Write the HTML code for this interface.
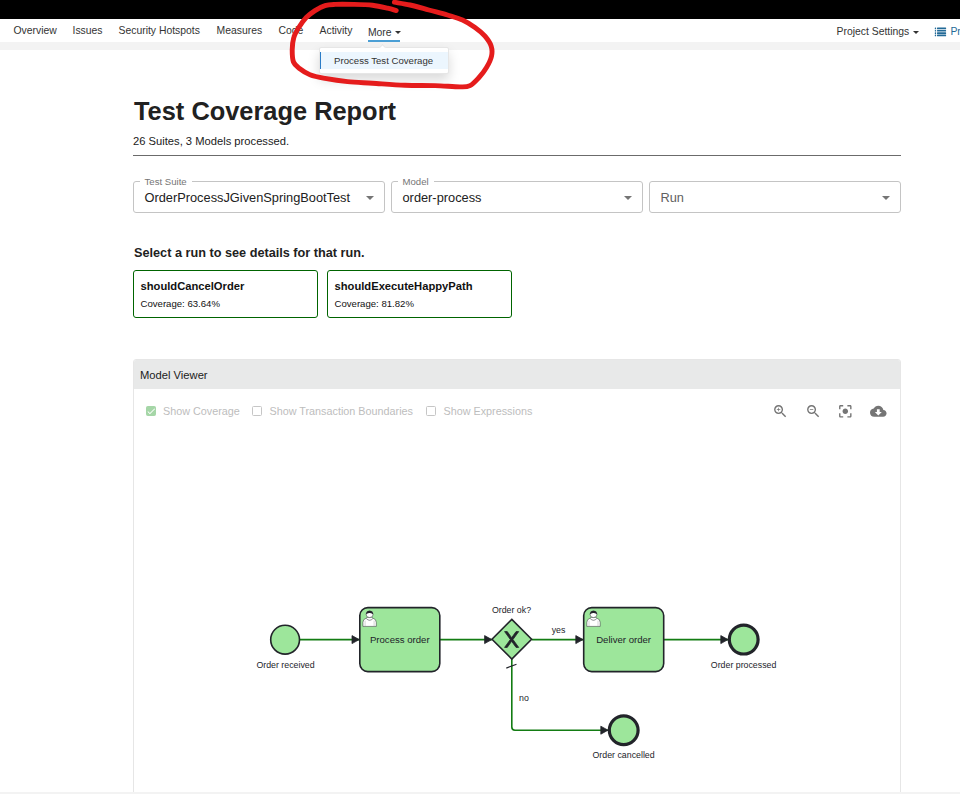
<!DOCTYPE html>
<html><head><meta charset="utf-8"><style>
*{box-sizing:border-box;margin:0;padding:0}
html,body{width:960px;height:794px;overflow:hidden;background:#fff}
body{position:relative;font-family:"Liberation Sans",sans-serif;color:#333}
.a{position:absolute;white-space:nowrap}
#topbar{left:0;top:0;width:960px;height:19px;background:#000}
#nav{left:0;top:19px;width:960px;height:23px;background:#fff}
#band{left:0;top:42px;width:960px;height:8px;background:#f3f3f3}
.ni{font-size:10.4px;line-height:12px;color:#333}
#more-ul{left:368px;top:40px;width:32px;height:2px;background:#4b9fd5}
.caret{width:0;height:0;border-left:3.2px solid transparent;border-right:3.2px solid transparent;border-top:3.2px solid #333}
#dd{left:319px;top:47px;width:129.5px;height:26.5px;background:#fff;border:1px solid #e6e6e6;border-radius:2px;box-shadow:0 6px 12px rgba(0,0,0,.15)}
#dd-item{left:319.8px;top:52px;width:128px;height:17px;background:#ecf6fe;border-left:1.5px solid #2a7cc7}
#dd-arrow{left:380.3px;top:44.6px;width:5px;height:5px;background:#fff;transform:rotate(45deg);border-left:1px solid #e6e6e6;border-top:1px solid #e6e6e6}
.title{font-size:25.4px;font-weight:bold;color:#212121;line-height:30px}
.sub{font-size:11.2px;color:#212121;line-height:13px}
#hr{left:133px;top:155px;width:768px;height:1px;background:#6b6b6b}
.sel{height:32px;border:1px solid #c4c4c4;border-radius:3px;top:181px}
.leg{font-size:9.6px;color:#757575;background:#fff;padding:0 5px;line-height:11px}
.val{font-size:12.8px;color:#212121;line-height:15px}
.arr{width:0;height:0;border-left:4px solid transparent;border-right:4px solid transparent;border-top:4px solid #757575}
.h2{font-size:12.7px;font-weight:bold;color:#212121;line-height:15px}
.card{top:270px;height:48px;border:1px solid #006400;border-radius:3px;width:185px}
.ct{font-size:11.2px;font-weight:bold;color:#111;line-height:13px}
.cc{font-size:9.6px;color:#111;line-height:11px}
#panel{left:133px;top:359px;width:768px;height:440px;border:1px solid #e6e6e6;border-radius:3px 3px 0 0}
#phead{left:134px;top:360px;width:766px;height:29px;background:#e8e9e9;border-radius:2px 2px 0 0}
.mv{font-size:11.2px;color:#212121;line-height:13px}
.cb{width:10.4px;height:10.4px;border:1px solid #c6c6c6;border-radius:1.5px;top:405.6px}
.cbl{font-size:10.8px;color:#bdbdbd;line-height:12px}
#bottom{left:0;top:792px;width:960px;height:2px;background:#f3f3f3}
</style></head><body>
<div class="a" id="topbar"></div>
<div class="a" id="nav"></div>
<div class="a" id="band"></div>
<div class="a ni" style="left:13.5px;top:24.5px">Overview</div>
<div class="a ni" style="left:72.5px;top:24.5px">Issues</div>
<div class="a ni" style="left:118.5px;top:24.5px">Security Hotspots</div>
<div class="a ni" style="left:216.5px;top:24.5px">Measures</div>
<div class="a ni" style="left:278.5px;top:24.5px">Code</div>
<div class="a ni" style="left:319.5px;top:24.5px">Activity</div>
<div class="a ni" style="left:367.9px;top:26.6px">More</div>
<div class="a caret" style="left:394.5px;top:31px"></div>
<div class="a" id="more-ul"></div>
<div class="a ni" style="left:836.5px;top:26px">Project Settings</div>
<div class="a caret" style="left:912.5px;top:30.5px"></div>
<svg class="a" style="left:934px;top:27px" width="13" height="10" viewBox="0 0 13 10">
<g fill="#236a97"><rect x="0.8" y="0.6" width="1.3" height="1.6" rx="0.5"/><rect x="3.0" y="0.6" width="9.1" height="1.6" rx="0.5"/><rect x="0.8" y="2.9" width="1.3" height="1.6" rx="0.5"/><rect x="3.0" y="2.9" width="9.1" height="1.6" rx="0.5"/><rect x="0.8" y="5.3" width="1.3" height="1.6" rx="0.5"/><rect x="3.0" y="5.3" width="9.1" height="1.6" rx="0.5"/><rect x="0.8" y="7.6" width="1.3" height="1.6" rx="0.5"/><rect x="3.0" y="7.6" width="9.1" height="1.6" rx="0.5"/></g></svg>
<div class="a ni" style="left:950.4px;top:26px;color:#236a97">Project Information</div>
<div class="a" id="dd"></div>
<div class="a" id="dd-arrow"></div>
<div class="a" id="dd-item"></div>
<div class="a" style="left:334.1px;top:54.6px;font-size:9.6px;line-height:11px;color:#333">Process Test Coverage</div>

<div class="a title" style="left:134px;top:96px">Test Coverage Report</div>
<div class="a sub" style="left:133px;top:135px">26 Suites, 3 Models processed.</div>
<div class="a" id="hr"></div>

<div class="a sel" style="left:133px;width:251.5px"></div>
<div class="a leg" style="left:139.5px;top:176px">Test Suite</div>
<div class="a val" style="left:144.5px;top:190px">OrderProcessJGivenSpringBootTest</div>
<div class="a arr" style="left:365.5px;top:196px"></div>
<div class="a sel" style="left:391px;width:251.5px"></div>
<div class="a leg" style="left:397.5px;top:176px">Model</div>
<div class="a val" style="left:402.5px;top:190px">order-process</div>
<div class="a arr" style="left:623.5px;top:196px"></div>
<div class="a sel" style="left:649px;width:252px"></div>
<div class="a val" style="left:660.5px;top:190px;color:#616161">Run</div>
<div class="a arr" style="left:881.5px;top:196px"></div>

<div class="a h2" style="left:134px;top:245.6px">Select a run to see details for that run.</div>
<div class="a card" style="left:133px"></div>
<div class="a ct" style="left:140.5px;top:280px">shouldCancelOrder</div>
<div class="a cc" style="left:140.5px;top:297.7px">Coverage: 63.64%</div>
<div class="a card" style="left:327px"></div>
<div class="a ct" style="left:334.5px;top:280px">shouldExecuteHappyPath</div>
<div class="a cc" style="left:334.5px;top:297.7px">Coverage: 81.82%</div>

<div class="a" id="panel"></div>
<div class="a" id="phead"></div>
<div class="a mv" style="left:140px;top:369px">Model Viewer</div>
<div class="a cb" style="left:145.6px;background:#a5d6a7;border-color:#a5d6a7"></div>
<svg class="a" style="left:145.6px;top:405.6px" width="10.4" height="10.4" viewBox="0 0 24 24"><path d="M9 16.17L4.83 12l-1.42 1.41L9 19 21 7l-1.41-1.41z" fill="#fff"/></svg>
<div class="a cbl" style="left:163px;top:404.9px">Show Coverage</div>
<div class="a cb" style="left:251.6px"></div>
<div class="a cbl" style="left:269.5px;top:404.9px">Show Transaction Boundaries</div>
<div class="a cb" style="left:425.6px"></div>
<div class="a cbl" style="left:443.5px;top:404.9px">Show Expressions</div>
<svg class="a" style="left:771.5px;top:402.6px" width="16.6" height="16.6" viewBox="0 0 24 24"><path fill="#757575" d="M15.5 14h-.79l-.28-.27C15.41 12.59 16 11.11 16 9.5 16 5.91 13.09 3 9.5 3S3 5.91 3 9.5 5.91 16 9.5 16c1.61 0 3.09-.59 4.23-1.57l.27.28v.79l5 4.99L20.49 19l-4.99-5zm-6 0C7.01 14 5 11.99 5 9.5S7.01 5 9.5 5 14 7.01 14 9.5 11.99 14 9.5 14zm2.5-4h-2v2H9v-2H7V9h2V7h1v2h2v1z"/></svg>
<svg class="a" style="left:804.7px;top:402.6px" width="16.6" height="16.6" viewBox="0 0 24 24"><path fill="#757575" d="M15.5 14h-.79l-.28-.27C15.41 12.59 16 11.11 16 9.5 16 5.91 13.09 3 9.5 3S3 5.91 3 9.5 5.91 16 9.5 16c1.61 0 3.09-.59 4.23-1.57l.27.28v.79l5 4.99L20.49 19l-4.99-5zm-6 0C7.01 14 5 11.99 5 9.5S7.01 5 9.5 5 14 7.01 14 9.5 11.99 14 9.5 14zM7 9h5v1H7z"/></svg>
<svg class="a" style="left:836.8px;top:402.9px" width="16.6" height="16.6" viewBox="0 0 24 24"><path fill="#757575" d="M12 8c-2.21 0-4 1.79-4 4s1.79 4 4 4 4-1.79 4-4-1.79-4-4-4zm-7 7H3v4c0 1.1.9 2 2 2h4v-2H5v-4zM5 5h4V3H5c-1.1 0-2 .9-2 2v4h2V5zm14-2h-4v2h4v4h2V5c0-1.1-.9-2-2-2zm0 16h-4v2h4c1.1 0 2-.9 2-2v-4h-2v4z"/></svg>
<svg class="a" style="left:870.2px;top:402.8px" width="16.6" height="16.6" viewBox="0 0 24 24"><path fill="#757575" d="M19.35 10.04C18.67 6.59 15.64 4 12 4 9.11 4 6.6 5.64 5.35 8.04 2.34 8.36 0 10.91 0 14c0 3.31 2.69 6 6 6h13c2.76 0 5-2.24 5-5 0-2.64-2.05-4.78-4.65-4.96zM17 13l-5 5-5-5h3V9h4v4h3z"/></svg>

<div class="a" id="bottom"></div>

<svg class="a" style="left:0;top:0" width="960" height="794" viewBox="0 0 960 794">
<defs><marker id="ah" viewBox="0 0 20 20" refX="11" refY="10" markerWidth="10" markerHeight="10" orient="auto"><path d="M2 5L11 10L2 15Z" fill="#22242a" stroke="#22242a" stroke-width="1"/></marker></defs>
<g fill="none" stroke="#137c13" stroke-width="1.6">
<path d="M299.5 639.6 H359.2" marker-end="url(#ah)"/>
<path d="M440 639.6 H491.8" marker-end="url(#ah)"/>
<path d="M531.8 639.6 H583" marker-end="url(#ah)"/>
<path d="M664 639.6 H728" marker-end="url(#ah)"/>
<path d="M511.8 659 V727 Q511.8 730.2 515 730.2 H608" marker-end="url(#ah)"/>
</g>
<path d="M506.3 668.1 L516.5 664.2" stroke="#22242a" stroke-width="1.2"/>
<g fill="#9de69b" stroke="#22242a">
<circle cx="285.1" cy="639.7" r="14.4" stroke-width="1.6"/>
<rect x="359.8" y="607.6" width="80" height="64" rx="8" stroke-width="1.6"/>
<rect x="583.7" y="607.6" width="80" height="64" rx="8" stroke-width="1.6"/>
<path d="M511.8 619.4 L531.6 639.2 L511.8 659 L492 639.2Z" stroke-width="1.6"/>
<circle cx="743.7" cy="639.6" r="14.4" stroke-width="3.2"/>
<circle cx="623.7" cy="730.2" r="14.4" stroke-width="3.2"/>
</g>
<polygon points="504.60,631.60 510.33,639.50 504.60,647.40 507.24,647.40 511.65,641.33 516.06,647.40 518.70,647.40 512.97,639.50 518.70,631.60 516.06,631.60 511.65,637.67 507.24,631.60" fill="#22242a" stroke="#22242a" stroke-width="0.8" stroke-linejoin="miter"/>
<g font-family="Liberation Sans" fill="#22242a">
<text x="285.5" y="668" font-size="8.8" text-anchor="middle">Order received</text>
<text x="399.8" y="642.8" font-size="9.6" text-anchor="middle">Process order</text>
<text x="623.6" y="642.8" font-size="9.6" text-anchor="middle">Deliver order</text>
<text x="511.5" y="612.9" font-size="8.8" text-anchor="middle">Order ok?</text>
<text x="558.5" y="633" font-size="8.8" text-anchor="middle">yes</text>
<text x="524" y="700.9" font-size="8.8" text-anchor="middle">no</text>
<text x="743.6" y="667.6" font-size="8.8" text-anchor="middle">Order processed</text>
<text x="623.6" y="757.9" font-size="8.8" text-anchor="middle">Order cancelled</text>
</g>
<g transform="translate(0,0)">
<path d="M362.9 626.4 L362.9 622.4 Q362.9 619.2 366.2 618.2 L367.6 617.2 L371.6 617.2 L373 618.2 Q376.3 619.2 376.3 622.4 L376.3 626.4 Z" fill="#fff" stroke="#22242a" stroke-width="0.5"/>
<ellipse cx="369.6" cy="614.3" rx="3.5" ry="3.3" fill="#fff" stroke="#22242a" stroke-width="0.5"/>
<path d="M366.1 614.6 Q365.9 610.8 369.6 610.8 Q373.3 610.8 373.1 614.6 Q371.8 612.9 369.6 613.1 Q367.4 612.9 366.1 614.6 Z" fill="#22242a"/>
<path d="M366.3 618.6 Q369.6 622 372.9 618.6" stroke="#22242a" stroke-width="0.5" fill="none"/>
<path d="M365.1 620.6 V626.2 M374.1 620.6 V626.2" stroke="#aaa" stroke-width="0.5"/>
</g><g transform="translate(223.9,0)">
<path d="M362.9 626.4 L362.9 622.4 Q362.9 619.2 366.2 618.2 L367.6 617.2 L371.6 617.2 L373 618.2 Q376.3 619.2 376.3 622.4 L376.3 626.4 Z" fill="#fff" stroke="#22242a" stroke-width="0.5"/>
<ellipse cx="369.6" cy="614.3" rx="3.5" ry="3.3" fill="#fff" stroke="#22242a" stroke-width="0.5"/>
<path d="M366.1 614.6 Q365.9 610.8 369.6 610.8 Q373.3 610.8 373.1 614.6 Q371.8 612.9 369.6 613.1 Q367.4 612.9 366.1 614.6 Z" fill="#22242a"/>
<path d="M366.3 618.6 Q369.6 622 372.9 618.6" stroke="#22242a" stroke-width="0.5" fill="none"/>
<path d="M365.1 620.6 V626.2 M374.1 620.6 V626.2" stroke="#aaa" stroke-width="0.5"/>
</g><path d="M396.2 10.6 C394.8 10.2 391.5 9.0 387.5 8.1 C383.5 7.2 378.1 5.9 372.5 5.2 C366.9 4.6 360.0 4.5 353.8 4.4 C347.5 4.3 339.8 4.2 335.0 4.4 C330.2 4.6 328.3 4.6 325.0 5.6 C321.7 6.6 318.1 8.6 315.0 10.6 C311.9 12.6 309.0 14.7 306.2 17.5 C303.5 20.3 300.8 24.2 298.8 27.5 C296.7 30.8 294.8 33.8 293.8 37.5 C292.7 41.2 292.3 45.9 292.2 50.0 C292.2 54.1 292.3 58.9 293.5 62.0 C294.7 65.1 296.8 66.4 299.5 68.5 C302.2 70.6 305.8 73.1 310.0 74.8 C314.2 76.5 318.8 77.3 325.0 78.4 C331.2 79.5 339.6 80.8 347.5 81.6 C355.4 82.4 362.9 82.6 372.5 83.2 C382.1 83.8 394.6 84.8 405.0 85.2 C415.4 85.6 425.8 85.3 435.0 85.6 C444.2 85.9 454.2 86.9 460.0 86.9 C465.8 86.9 466.8 87.2 470.0 85.6 C473.2 84.0 476.2 80.5 479.0 77.5 C481.8 74.5 484.4 71.0 486.5 67.5 C488.6 64.0 490.7 59.8 491.5 56.2 C492.3 52.7 492.3 49.6 491.2 46.2 C490.2 42.9 487.7 39.4 485.0 36.2 C482.3 33.1 478.8 30.2 475.0 27.5 C471.2 24.8 467.1 22.1 462.5 20.0 C457.9 17.9 453.1 16.7 447.5 15.0 C441.9 13.3 435.0 11.7 428.8 10.0 C422.5 8.3 415.7 6.3 410.0 5.0 C404.3 3.7 397.0 2.7 394.4 2.2" fill="none" stroke="#e51c1c" stroke-width="4.9" stroke-linecap="round" stroke-linejoin="round"/>
</svg>
</body></html>
